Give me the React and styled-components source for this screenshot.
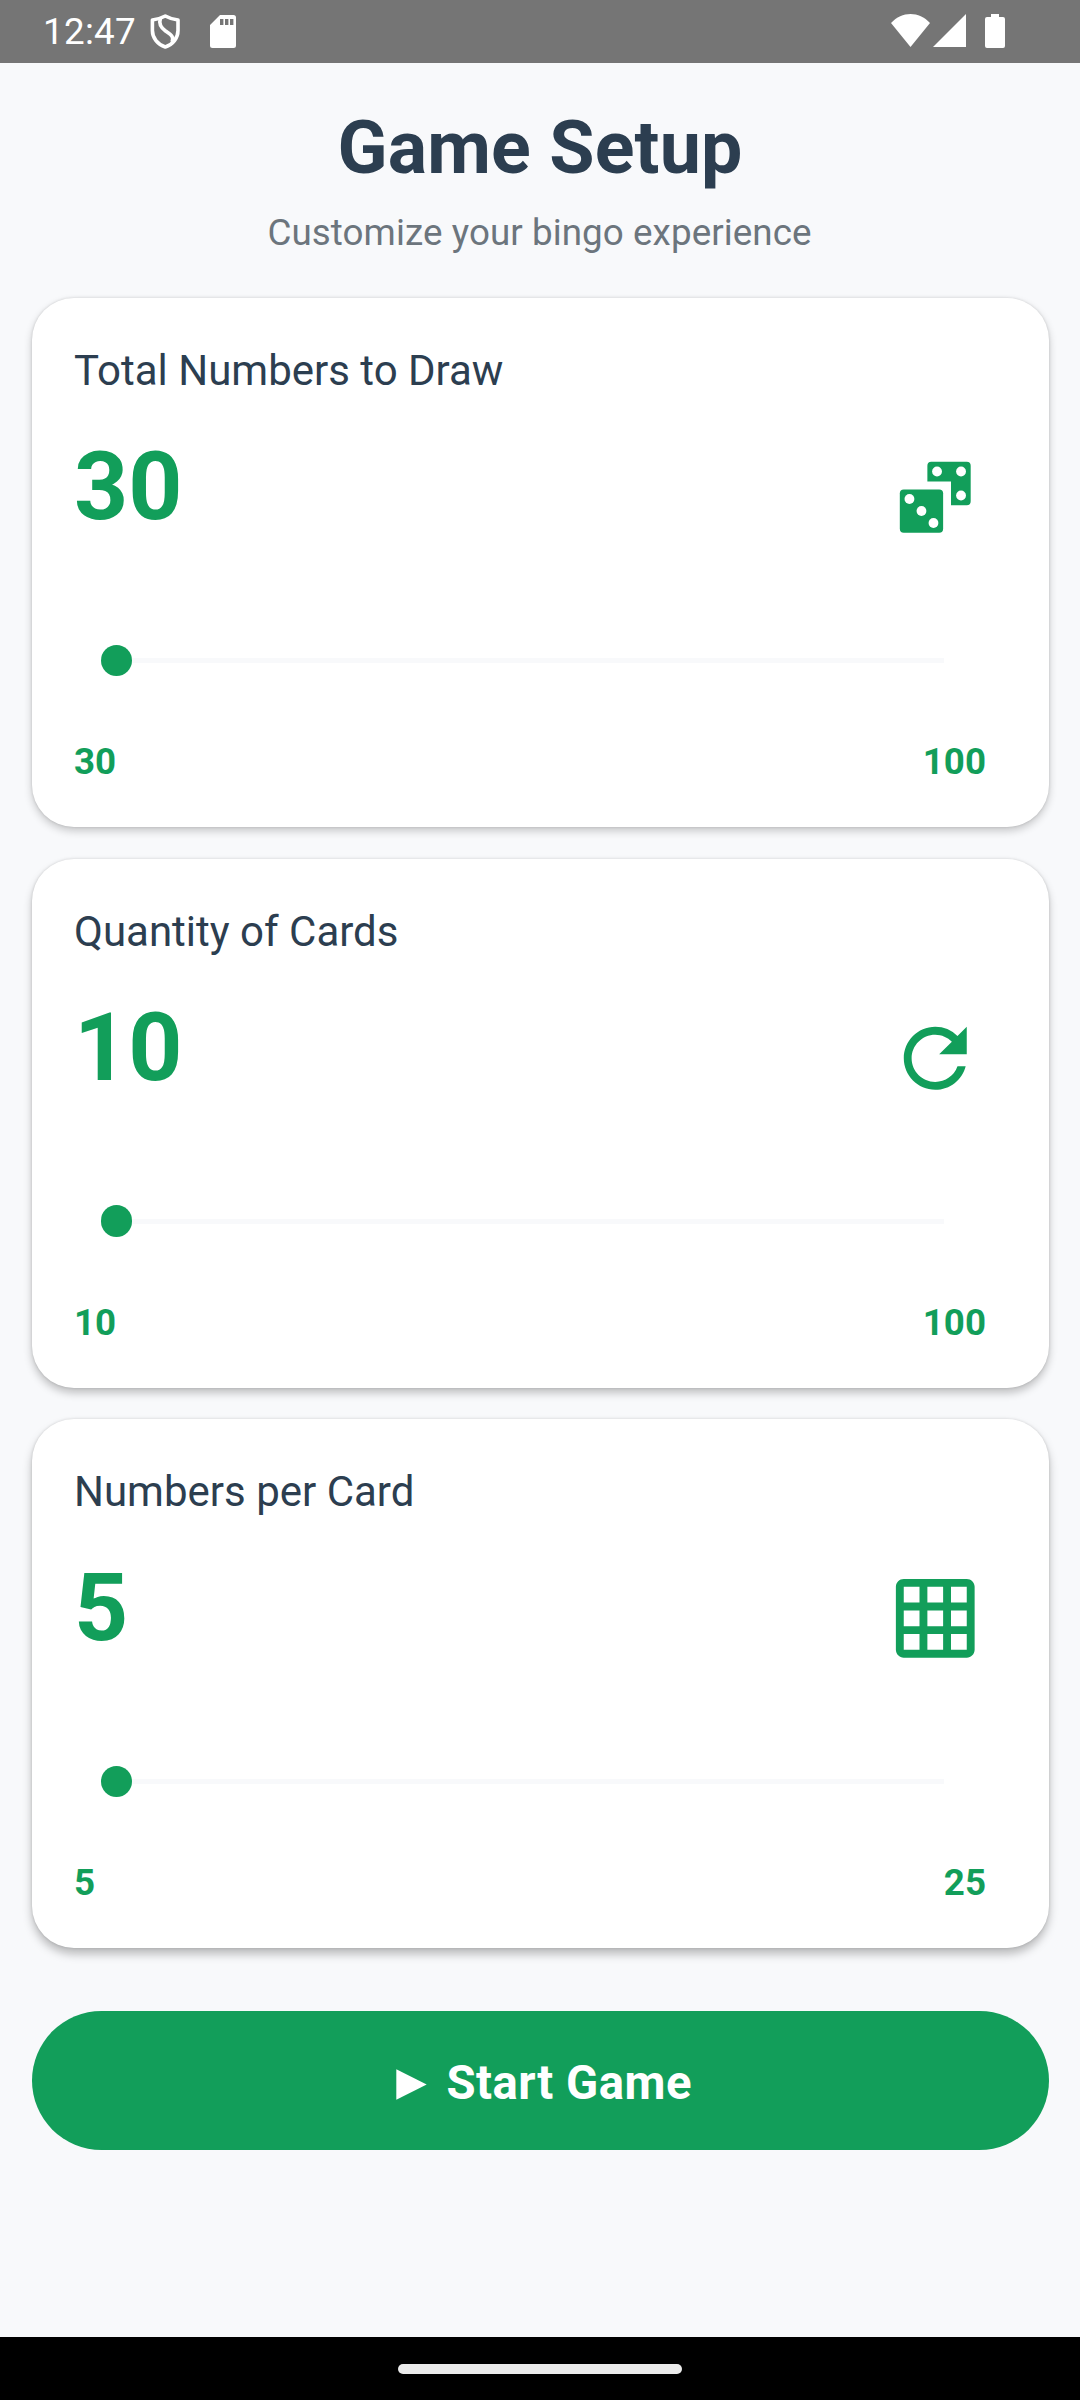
import React from "react";
import styled, { createGlobalStyle } from "styled-components";

const GREEN = "#129e5a";
const NAVY = "#2c3e50";

const GlobalStyle = createGlobalStyle`
  * { box-sizing: border-box; }
  html, body { margin: 0; padding: 0; background: #f8f9fb; }
  body { font-family: Roboto, "Noto Sans", sans-serif; }
`;

const Screen = styled.div`
  width: 1080px;
  height: 2400px;
  display: flex;
  flex-direction: column;
  overflow: hidden;
  background: #f8f9fb;
`;

const StatusBar = styled.header`
  height: 63px;
  flex: none;
  display: flex;
  justify-content: space-between;
  padding: 0 75px 0 43px;
  background: #757575;
  color: #fff;
`;

const StatusGroup = styled.div`
  display: flex;
  align-items: flex-start;
`;

const Clock = styled.span`
  width: 106px;
  font-size: 36.75px;
  line-height: 63px;
  letter-spacing: 0.3px;
  white-space: nowrap;
`;

const StatusIcon = styled.svg`
  display: block;
  flex: none;
  width: ${(p) => p.$w}px;
  height: 36px;
  margin: 14px 0 0 ${(p) => p.$gap || 0}px;
`;

const Content = styled.main`
  flex: 1;
  display: flex;
  flex-direction: column;
  padding: 0 31px 0 32px;
`;

const Heading = styled.div`
  height: 235px;
  padding-top: 35px;
  text-align: center;
`;

const Title = styled.h1`
  margin: 0 1px 0 0;
  font-size: 73.5px;
  line-height: 100px;
  font-weight: 700;
  letter-spacing: 0.15px;
  color: ${NAVY};
`;

const Subtitle = styled.p`
  margin: 10px 2px 0 0;
  font-size: 36.75px;
  line-height: 50px;
  letter-spacing: 0.08px;
  color: #6c757d;
`;

const CardList = styled.div`
  display: flex;
  flex-direction: column;
  gap: 31.5px;
`;

const Card = styled.section`
  height: 529px;
  padding: 43px 63px 0 42px;
  border-radius: 42px;
  background: #fff;
  box-shadow:
    0 ${(p) => 4 + p.$depth}px ${(p) => 8 + p.$depth}px rgba(0, 0, 0, ${(p) => 0.2 + p.$depth * 0.03}),
    0 0 3px rgba(0, 0, 0, 0.14);
`;

const Label = styled.div`
  font-size: 42px;
  line-height: 60px;
  color: ${NAVY};
`;

const ValueRow = styled.div`
  display: flex;
  justify-content: space-between;
  align-items: flex-start;
  height: 180px;
  padding-top: 22px;
`;

const Value = styled.div`
  margin-top: 8px;
  font-size: 94.5px;
  line-height: 112px;
  font-weight: 700;
  color: ${GREEN};
`;

const CardIcon = styled.svg`
  display: block;
  width: 94.5px;
  height: 94.5px;
  margin-top: 27.4px;
  margin-right: 3.4px;
  fill: ${GREEN};
`;

const Slider = styled.div`
  display: flex;
  align-items: center;
  height: 32px;
  margin: 63.5px 42px 0 26.5px;
`;

const Thumb = styled.div`
  width: 31.5px;
  height: 31.5px;
  flex: none;
  border-radius: 50%;
  background: ${GREEN};
`;

const Track = styled.div`
  flex: 1;
  height: 5px;
  background: #f8f9fb;
`;

const Range = styled.div`
  display: flex;
  justify-content: space-between;
  margin-top: 60.5px;
  font-size: 36.75px;
  line-height: 50px;
  font-weight: 700;
  color: ${GREEN};
`;

const StartButton = styled.button`
  display: flex;
  align-items: center;
  justify-content: center;
  gap: 19.5px;
  flex: none;
  height: 139px;
  margin: 63px 0 0;
  padding: 4px 0 0 7px;
  border: 0;
  border-radius: 70px;
  background: ${GREEN};
  color: #fff;
  font: 700 47.25px/60px Roboto, sans-serif;
  letter-spacing: 0.5px;
`;

const PlayMark = styled.svg`
  display: block;
  width: 31px;
  height: 31px;
  margin-top: 4px;
  fill: currentColor;
`;

const NavBar = styled.footer`
  height: 63px;
  flex: none;
  display: flex;
  justify-content: center;
  align-items: center;
  background: #000;
`;

const HomeHandle = styled.div`
  width: 284px;
  height: 10px;
  border-radius: 5px;
  background: #ebebeb;
`;

const DiceIcon = () => (
  <CardIcon viewBox="0 0 24 24">
    <path d="M11 3h9a1 1 0 0 1 1 1v9a1 1 0 0 1-1 1h-4V8h-6V4a1 1 0 0 1 1-1z" />
    <rect x="3" y="10" width="11" height="11" rx="1" />
    <g fill="#fff">
      <circle cx="12.45" cy="5.45" r="1.25" />
      <circle cx="18.55" cy="5.45" r="1.25" />
      <circle cx="18.55" cy="11.55" r="1.25" />
      <circle cx="5.45" cy="12.45" r="1.25" />
      <circle cx="8.5" cy="15.5" r="1.25" />
      <circle cx="11.55" cy="18.55" r="1.25" />
    </g>
  </CardIcon>
);

const RefreshIcon = () => (
  <CardIcon viewBox="0 0 24 24">
    <path d="M17.65 6.35A7.958 7.958 0 0 0 12 4c-4.42 0-7.99 3.58-7.99 8s3.57 8 7.99 8c3.73 0 6.84-2.55 7.73-6h-2.08A5.99 5.99 0 0 1 12 18c-3.31 0-6-2.69-6-6s2.69-6 6-6c1.66 0 3.14.69 4.22 1.78L13 11h7V4l-2.35 2.35z" />
  </CardIcon>
);

const GridIcon = () => (
  <CardIcon viewBox="0 0 24 24">
    <path d="M20 2H4c-1.1 0-2 .9-2 2v16c0 1.1.9 2 2 2h16c1.1 0 2-.9 2-2V4c0-1.1-.9-2-2-2zM8 20H4v-4h4v4zm0-6H4v-4h4v4zm0-6H4V4h4v4zm6 12h-4v-4h4v4zm0-6h-4v-4h4v4zm0-6h-4V4h4v4zm6 12h-4v-4h4v4zm0-6h-4v-4h4v4zm0-6h-4V4h4v4z" />
  </CardIcon>
);

const settings = [
  { label: "Total Numbers to Draw", value: 30, max: 100, Icon: DiceIcon },
  { label: "Quantity of Cards", value: 10, max: 100, Icon: RefreshIcon },
  { label: "Numbers per Card", value: 5, max: 25, Icon: GridIcon },
];

export default function App() {
  return (
    <Screen>
      <GlobalStyle />
      <StatusBar>
        <StatusGroup>
          <Clock>12:47</Clock>
          <StatusIcon $w={32} viewBox="0 0 32 36" fill="none" stroke="#fff" strokeWidth="3.6" strokeLinejoin="round">
            <path d="M16.3 2 Q22 5.200 29 6V16.500C29 24 24 30.500 16.300 33 8.600 30.500 3.400 24 3.400 16.500V6Q10.500 5.200 16.300 2Z" />
            <path d="M11.500 4.200C9.500 10 11.500 13.500 16.500 17 22 20.800 25.300 22.500 23 28" />
          </StatusIcon>
          <StatusIcon $w={26} $gap={29} viewBox="0 0 26 36">
            <path fill="#fff" d="M10 1H23.500a2.500 2.500 0 0 1 2.500 2.500V31.500a2.500 2.500 0 0 1-2.500 2.500H2.500A2.500 2.500 0 0 1 0 31.500V11Z" />
            <path fill="#757575" d="M10 5h3.400v6H10zM15 5h3.400v6H15zM20 5h3.400v6H20z" />
          </StatusIcon>
        </StatusGroup>
        <StatusGroup>
          <StatusIcon $w={39} viewBox="0 0 39 36" fill="#fff">
            <path d="M0 9C11-3 28-3 39 9L19.500 33Z" />
          </StatusIcon>
          <StatusIcon $w={33} $gap={3} viewBox="0 0 33 36" fill="#fff">
            <path d="M33 0V33H0Z" />
          </StatusIcon>
          <StatusIcon $w={20} $gap={19} viewBox="0 0 20 36" fill="#fff">
            <path d="M6 0h8v3h4a2 2 0 0 1 2 2v27a2 2 0 0 1-2 2H2a2 2 0 0 1-2-2V5a2 2 0 0 1 2-2h4z" />
          </StatusIcon>
        </StatusGroup>
      </StatusBar>

      <Content>
        <Heading>
          <Title>Game Setup</Title>
          <Subtitle>Customize your bingo experience</Subtitle>
        </Heading>
        <CardList>
          {settings.map(({ label, value, max, Icon }, index) => (
            <Card key={label} $depth={index}>
              <Label>{label}</Label>
              <ValueRow>
                <Value>{value}</Value>
                <Icon />
              </ValueRow>
              <Slider>
                <Thumb />
                <Track />
              </Slider>
              <Range>
                <span>{value}</span>
                <span>{max}</span>
              </Range>
            </Card>
          ))}
        </CardList>
        <StartButton>
          <PlayMark viewBox="0 0 31 31">
            <path d="M0.300 0.300 30.700 15.500 0.300 30.700Z" />
          </PlayMark>
          Start Game
        </StartButton>
      </Content>

      <NavBar>
        <HomeHandle />
      </NavBar>
    </Screen>
  );
}
